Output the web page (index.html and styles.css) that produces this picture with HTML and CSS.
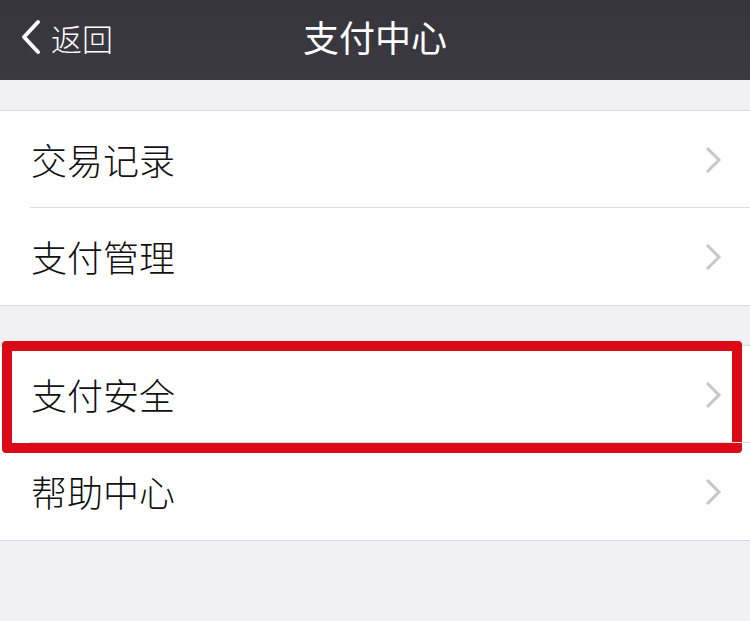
FILE: index.html
```html
<!DOCTYPE html>
<html lang="zh-CN">
<head>
<meta charset="utf-8">
<link rel="stylesheet" href="styles.css">
</head>
<body>
<header class="navbar">
  <div class="back">
    <svg class="back-icon" width="22" height="36" viewBox="0 0 22 36"><polyline points="18,3 4,18 18,33" fill="none" stroke="#fff" stroke-width="4" stroke-linecap="round" stroke-linejoin="round"/></svg>
    <span class="back-text">返回</span>
  </div>
  <h1 class="title">支付中心</h1>
</header>
<main class="content">
  <section class="group group-first">
    <div class="row"><span class="label">交易记录</span><svg class="chev" width="18" height="28" viewBox="0 0 18 28"><polyline points="3,2 15,14 3,26" fill="none" stroke="#c7c7cb" stroke-width="3"/></svg></div>
    <div class="row"><span class="label">支付管理</span><svg class="chev" width="18" height="28" viewBox="0 0 18 28"><polyline points="3,2 15,14 3,26" fill="none" stroke="#c7c7cb" stroke-width="3"/></svg></div>
  </section>
  <section class="group group-second">
    <div class="row"><span class="label">支付安全</span><svg class="chev" width="18" height="28" viewBox="0 0 18 28"><polyline points="3,2 15,14 3,26" fill="none" stroke="#c7c7cb" stroke-width="3"/></svg>
      <div class="highlight-box"></div>
    </div>
    <div class="row"><span class="label">帮助中心</span><svg class="chev" width="18" height="28" viewBox="0 0 18 28"><polyline points="3,2 15,14 3,26" fill="none" stroke="#c7c7cb" stroke-width="3"/></svg></div>
  </section>
</main>
</body>
</html>
```
FILE: styles.css
```css
html, body {
  margin: 0;
  padding: 0;
}
body {
  width: 750px;
  height: 621px;
  background: #efeff4;
  font-family: "Noto Sans CJK SC", "Noto Sans", sans-serif;
  overflow: hidden;
}
.navbar {
  height: 80px;
  background: linear-gradient(#36353b, #3b3a42);
  position: relative;
  display: flex;
  align-items: center;
  color: #fff;
}
.back {
  display: flex;
  align-items: center;
  padding-left: 20px;
  gap: 9px;
  margin-top: -6px;
}
.back-icon {
  display: block;
}
.back-text {
  font-size: 31px;
  line-height: 1;
  font-weight: 300;
}
.title {
  position: absolute;
  left: 0;
  right: 0;
  top: 0;
  height: 72px;
  margin: 0;
  display: flex;
  align-items: center;
  justify-content: center;
  font-size: 36px;
  font-weight: 400;
  pointer-events: none;
}
.content {
  display: flex;
  flex-direction: column;
}
.group {
  background: #fff;
  border-top: 1px solid #d9d9dd;
  border-bottom: 1px solid #d9d9dd;
}
.group-first {
  margin-top: 30px;
}
.group-second {
  margin-top: 39px;
}
.row {
  position: relative;
  height: 97px;
  display: flex;
  align-items: center;
  justify-content: space-between;
  padding: 0 28px 0 31px;
}
.row + .row::before {
  content: "";
  position: absolute;
  left: 30px;
  right: 0;
  top: -1px;
  height: 1px;
  background: #dcdcdf;
}
.label {
  font-size: 36px;
  line-height: 1;
  color: #111;
  font-weight: 300;
  margin-top: -2px;
}
.chev {
  display: block;
}
.highlight-box {
  position: absolute;
  left: 2px;
  top: -5px;
  width: 720px;
  height: 92px;
  border: 10px solid #dc0a16;
  border-radius: 4px;
  pointer-events: none;
}
```
